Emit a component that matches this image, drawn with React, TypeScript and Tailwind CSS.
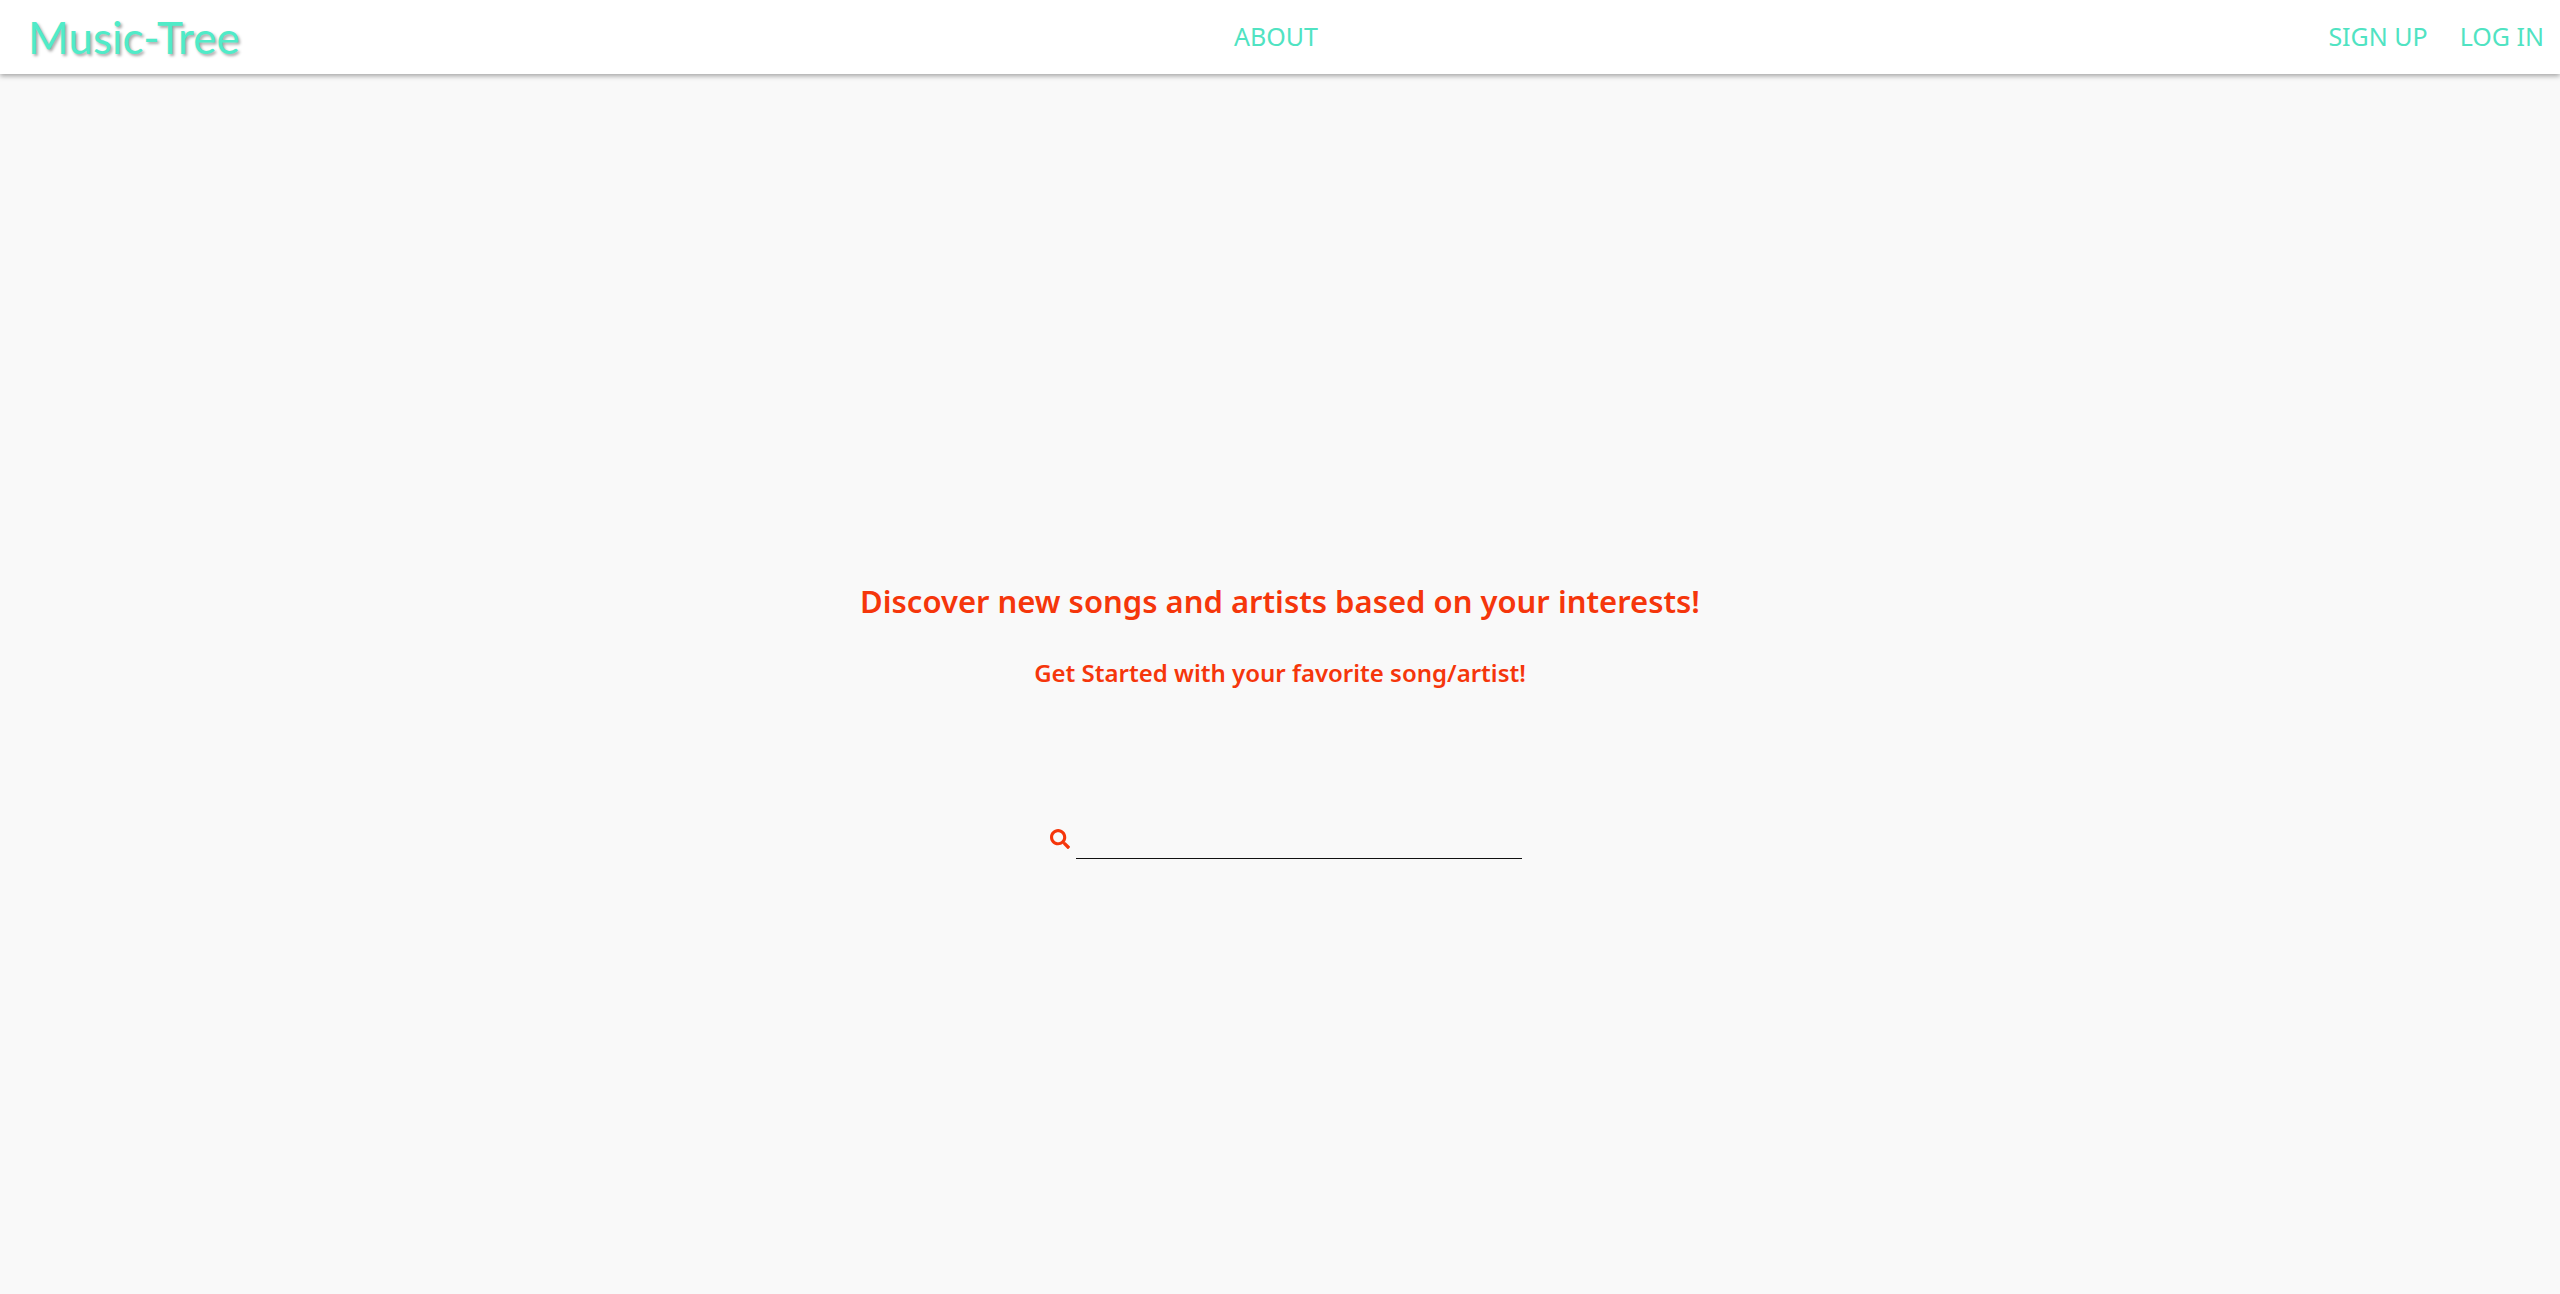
import { FaSearch } from "react-icons/fa";

function Header() {
  return (
    <header className="relative grid h-[74px] grid-cols-[1fr_auto_1fr] items-center bg-white px-4 text-[25px] text-[#50e3c2] shadow-[0_2px_5px_rgba(0,0,0,0.35)]">
      <a
        href="#home"
        className="justify-self-start pl-3 font-['Lato',sans-serif] text-[44px] leading-none font-normal text-[#50ebc8] [text-shadow:2px_2px_3px_rgba(0,0,0,0.35)]"
      >
        Music-Tree
      </a>
      <nav aria-label="Main" className="pr-2">
        <a href="#about">ABOUT</a>
      </nav>
      <nav aria-label="Account" className="flex gap-8 justify-self-end">
        <a href="#signup">SIGN UP</a>
        <a href="#login">LOG IN</a>
      </nav>
    </header>
  );
}

export default function App() {
  return (
    <div className="flex min-h-screen flex-col bg-[#f9f9f9] font-['Noto_Sans',sans-serif]">
      <Header />
      <main className="flex grow flex-col items-center justify-center pt-[72px] text-[#f5360b]">
        <h1 className="text-[31px] leading-[40px] font-semibold">
          Discover new songs and artists based on your interests!
        </h1>
        <h2 className="mt-9 text-[24px] leading-[32px] font-semibold">
          Get Started with your favorite song/artist!
        </h2>
        <form role="search" className="mt-[130px] flex items-center gap-1.5 pl-3">
          <label htmlFor="query" aria-label="Search for a song or artist">
            <FaSearch size={20} />
          </label>
          <input
            id="query"
            type="text"
            className="h-[40px] w-[446px] border-b border-[#111111] bg-transparent text-[24px] outline-none"
          />
        </form>
      </main>
    </div>
  );
}
